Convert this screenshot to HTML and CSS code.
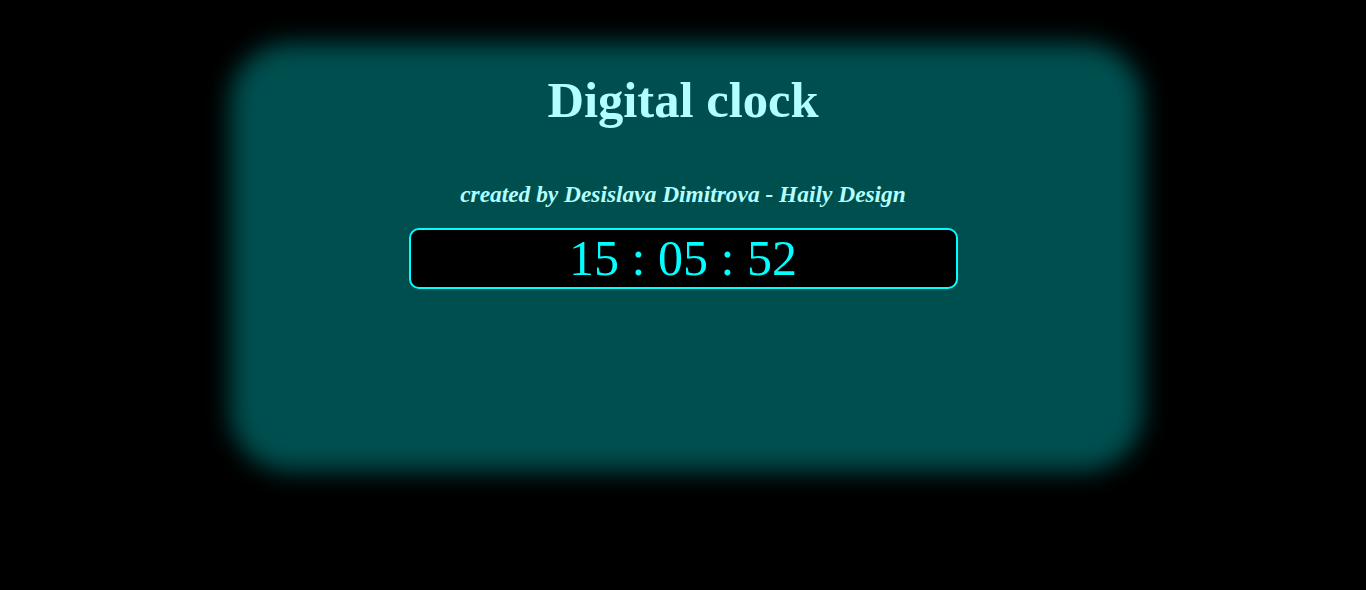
FILE: index.html
```html
<!DOCTYPE html>
<html>
<head>
<meta charset="utf-8">
<link rel="stylesheet" href="styles.css">
</head>
<body>
<div class="panel">
  <h1 class="title">Digital clock</h1>
  <p class="author">created by Desislava Dimitrova - Haily Design</p>
  <div class="clock">15 : 05 : 52</div>
</div>
</body>
</html>
```
FILE: styles.css
```css
html {
  background: #000;
}
body {
  margin: 0;
  min-height: 590px;
  box-sizing: border-box;
  font-family: "Liberation Serif", "Times New Roman", serif;
  padding-top: 67px;
}
.panel {
  width: 865px;
  height: 380px;
  margin: 0 0 0 254px;
  box-sizing: border-box;
  padding-top: 5px;
  padding-right: 7px;
  background: #004f4f;
  border-radius: 36px;
  box-shadow: 0 0 24px 24px #004f4f;
  display: flex;
  flex-direction: column;
  align-items: center;
}
.title {
  margin: 0;
  font-size: 50.6px;
  line-height: 56px;
  font-weight: bold;
  color: #b3ffff;
}
.author {
  margin: 54px 0 0;
  font-size: 23.4px;
  line-height: 24px;
  font-weight: bold;
  font-style: italic;
  color: #b3ffff;
}
.clock {
  margin-top: 22px;
  width: 549px;
  height: 61px;
  box-sizing: border-box;
  border: 2px solid #00ffff;
  border-radius: 10px;
  background: #000;
  color: #00ffff;
  font-size: 50px;
  line-height: 56px;
  text-align: center;
}
```
